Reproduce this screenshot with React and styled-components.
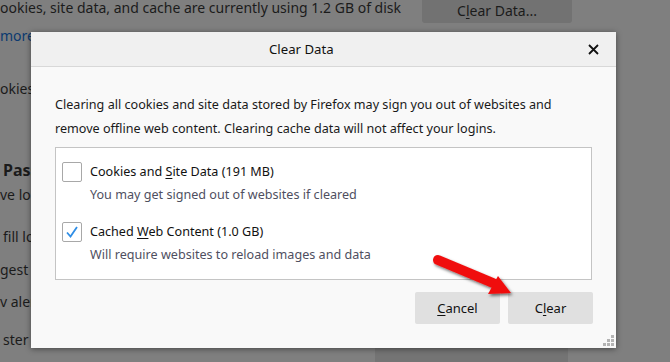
import React from 'react';
import styled, { createGlobalStyle } from 'styled-components';

const GlobalStyle = createGlobalStyle`
  html, body {
    margin: 0;
    padding: 0;
    overflow: hidden;
  }
  body {
    font-family: 'Noto Sans', 'Open Sans', sans-serif;
  }
`;

const Page = styled.div`
  position: relative;
  width: 670px;
  height: 362px;
  overflow: hidden;
  background: #7f7f7f;
  color: #1b1b1b;
  font-size: 14px;
`;

// greyed-out preferences page behind the dialog
const Backdrop = styled.div`
  display: flex;
  flex-direction: column;
`;

const TopRow = styled.div`
  display: flex;
  align-items: flex-start;
  height: 27px;
`;

const BgText = styled.div`
  height: ${(p) => p.h || 30}px;
  line-height: 18px;
  padding-left: ${(p) => p.indent || 0}px;
  white-space: nowrap;
  font-weight: ${(p) => (p.bold ? 700 : 400)};
  font-size: ${(p) => (p.bold ? 16 : 14)}px;
  color: ${(p) => (p.link ? '#0b3a70' : '#1b1b1b')};
`;

const BgButton = styled.div`
  flex-shrink: 0;
  margin-left: auto;
  margin-right: 98px;
  width: 150px;
  height: 26px;
  background: #727272;
  border-radius: 0 0 3px 3px;
  display: flex;
  align-items: center;
  justify-content: center;
  font-size: 14px;
  margin-top: -3px;
`;

const BgFooter = styled.div`
  position: absolute;
  left: 375px;
  top: 348px;
  width: 193px;
  height: 16px;
  background: #747474;
`;

const Dialog = styled.div`
  position: absolute;
  left: 31px;
  top: 32px;
  width: 585px;
  height: 316px;
  background: #f9f9f9;
  box-shadow: 0 1px 6px rgba(0, 0, 0, 0.45);
  display: flex;
  flex-direction: column;
  font-size: 12.6px;
  color: #1a1a1a;
`;

const Header = styled.div`
  height: 34px;
  background: #f0f0f0;
  border-bottom: 1px solid #d8d8d8;
  display: flex;
  align-items: center;
`;

const Title = styled.div`
  padding-left: 238px;
  font-size: 13.2px;
  color: #111;
`;

const CloseBtn = styled.div`
  margin-left: auto;
  margin-right: 17px;
  width: 12px;
  height: 12px;
  display: flex;
  align-items: center;
  justify-content: center;
`;

const Body = styled.div`
  flex: 1;
  padding: 26px 24px 0 24px;
  display: flex;
  flex-direction: column;
  position: relative;
`;

const Intro = styled.p`
  margin: 0;
  line-height: 24px;
  color: #1a1a1a;
`;

const ListBox = styled.div`
  margin-top: 6px;
  height: 133px;
  width: 537px;
  background: #fff;
  border: 1px solid #c4c4c4;
  padding: 14px 0 0 6px;
  box-sizing: border-box;
  display: flex;
  flex-direction: column;
  gap: 17px;
`;

const Option = styled.div`
  display: grid;
  grid-template-columns: 20px 1fr;
  column-gap: 8px;
`;

const Box = styled.div`
  width: 18px;
  height: 18px;
  border: 1px solid #a8a8a8;
  border-radius: 2px;
  background: #fff;
  display: flex;
  align-items: center;
  justify-content: center;
`;

const OptLabel = styled.div`
  line-height: 20px;
  color: #111;
`;

const OptDesc = styled.div`
  grid-column: 2;
  line-height: 20px;
  margin-top: 3px;
  color: #4f4f5f;
`;

const U = styled.span`
  text-decoration: underline;
  text-underline-offset: 2px;
`;

const Footer = styled.div`
  display: flex;
  justify-content: flex-end;
  gap: 8px;
  margin-top: 12px;
  width: 538px;
`;

const Button = styled.div`
  width: 85px;
  height: 32px;
  background: #e0e0e0;
  border-radius: 2px;
  display: flex;
  align-items: center;
  justify-content: center;
  color: #111;
  font-size: 13px;
`;

const Grip = styled.svg`
  position: absolute;
  right: 1px;
  bottom: 1px;
`;

const Arrow = styled.svg`
  position: absolute;
  left: 425px;
  top: 250px;
  overflow: visible;
`;

const Check = () => (
  <svg width="14" height="14" viewBox="0 0 14 14">
    <path d="M2 7.5 L5.5 11.5 L12 2" fill="none" stroke="#2f8ee6" strokeWidth="1.8" />
  </svg>
);

const App = () => {
  return (
    <Page>
      <GlobalStyle />
      <Backdrop>
        <TopRow>
          <BgText h={27} style={{ marginTop: -1 }}>
            ookies, site data, and cache are currently using 1.2 GB of disk
          </BgText>
          <BgButton>
            C<U>l</U>ear Data...
          </BgButton>
        </TopRow>
        <BgText h={53} link>more</BgText>
        <BgText h={81}>okies</BgText>
        <BgText h={25} bold indent={3}>Pass</BgText>
        <BgText h={42}>ve lo</BgText>
        <BgText h={33} indent={3}>f<U>i</U>ll lo</BgText>
        <BgText h={32}>gest a</BgText>
        <BgText h={38}>v aler</BgText>
        <BgText h={30} indent={3}>ster</BgText>
      </Backdrop>
      <BgFooter />

      <Dialog>
        <Header>
          <Title>Clear Data</Title>
          <CloseBtn>
            <svg width="11" height="11" viewBox="0 0 11 11">
              <path d="M1 1 L10 10 M10 1 L1 10" stroke="#111" strokeWidth="1.8" />
            </svg>
          </CloseBtn>
        </Header>
        <Body>
          <Intro>
            Clearing all cookies and site data stored by Firefox may sign you out of websites and
            <br />
            remove offline web content. Clearing cache data will not affect your logins.
          </Intro>
          <ListBox>
            <Option>
              <Box />
              <OptLabel>
                Cookies and <U>S</U>ite Data (191 MB)
              </OptLabel>
              <OptDesc>You may get signed out of websites if cleared</OptDesc>
            </Option>
            <Option>
              <Box>
                <Check />
              </Box>
              <OptLabel>
                Cached <U>W</U>eb Content (1.0 GB)
              </OptLabel>
              <OptDesc>Will require websites to reload images and data</OptDesc>
            </Option>
          </ListBox>
          <Footer>
            <Button>
              <U>C</U>ancel
            </Button>
            <Button>
              C<U>l</U>ear
            </Button>
          </Footer>
        </Body>
        <Grip width="12" height="12" viewBox="0 0 12 12">
          {[
            [8, 0],
            [4, 4],
            [8, 4],
            [0, 8],
            [4, 8],
            [8, 8],
          ].map(([x, y]) => (
            <rect key={`${x}-${y}`} x={x} y={y} width="3" height="3" fill="#b4b4b4" />
          ))}
        </Grip>
      </Dialog>

      <Arrow width="100" height="60" viewBox="0 0 100 60">
        <defs>
          <filter id="arrowShadow" x="-20%" y="-20%" width="160%" height="160%">
            <feDropShadow dx="1.5" dy="2" stdDeviation="1.5" floodColor="#000" floodOpacity="0.55" />
          </filter>
        </defs>
        <g filter="url(#arrowShadow)">
          <path d="M13 10 L68 33" stroke="#f01010" strokeWidth="10" strokeLinecap="round" />
          <polygon points="86,43 63,44 73,26" fill="#f01010" />
        </g>
      </Arrow>
    </Page>
  );
};

export default App;
